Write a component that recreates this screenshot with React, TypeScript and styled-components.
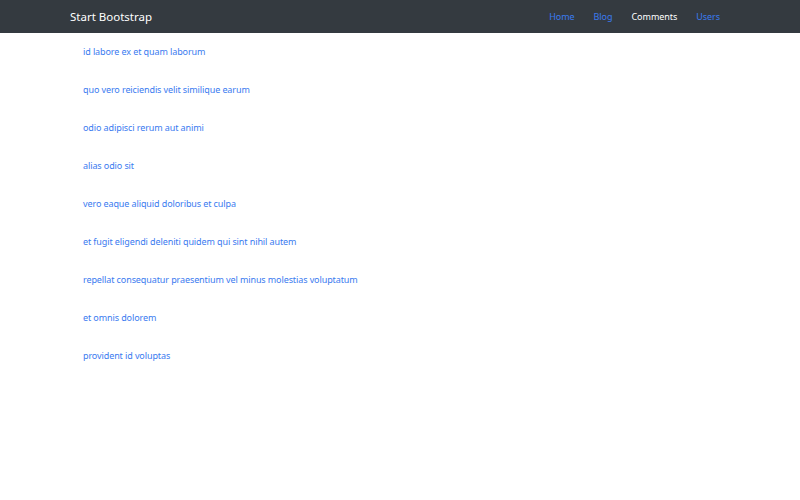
import React from "react";
import styled, { createGlobalStyle } from "styled-components";

const Global = createGlobalStyle`
  html, body { margin: 0; padding: 0; background: #fff; }
  body { font-family: "Noto Sans", "Open Sans", sans-serif; }
  * { box-sizing: border-box; }
`;

const Navbar = styled.nav`
  height: 33px;
  background: #343a40;
  display: flex;
  align-items: center;
  justify-content: space-between;
  padding: 0 80px 0 70px;
`;

const Brand = styled.a`
  color: #fff;
  font-size: 11.5px;
  text-decoration: none;
`;

const NavLinks = styled.div`
  display: flex;
  gap: 19px;
`;

const NavLink = styled.a<{ $active?: boolean }>`
  color: ${(p) => (p.$active ? "#fff" : "#3a7bf0")};
  font-size: 9px;
  letter-spacing: -0.05px;
  text-decoration: none;
`;

const List = styled.ul`
  list-style: none;
  margin: 0;
  padding: 12px 0 0 83px;
  display: flex;
  flex-direction: column;
  gap: 25px;
`;

const Item = styled.li`
  font-size: 9px;
  line-height: 13px;
  height: 13px;
`;

const ItemLink = styled.a`
  color: #3a7bf0;
  letter-spacing: -0.1px;
  text-decoration: none;
`;

const items = [
  "id labore ex et quam laborum",
  "quo vero reiciendis velit similique earum",
  "odio adipisci rerum aut animi",
  "alias odio sit",
  "vero eaque aliquid doloribus et culpa",
  "et fugit eligendi deleniti quidem qui sint nihil autem",
  "repellat consequatur praesentium vel minus molestias voluptatum",
  "et omnis dolorem",
  "provident id voluptas",
];

export default function App() {
  return (
    <>
      <Global />
      <Navbar>
        <Brand href="#">Start Bootstrap</Brand>
        <NavLinks>
          <NavLink href="#">Home</NavLink>
          <NavLink href="#">Blog</NavLink>
          <NavLink href="#" $active>Comments</NavLink>
          <NavLink href="#">Users</NavLink>
        </NavLinks>
      </Navbar>
      <List>
        {items.map((t) => (
          <Item key={t}>
            <ItemLink href="#">{t}</ItemLink>
          </Item>
        ))}
      </List>
    </>
  );
}
